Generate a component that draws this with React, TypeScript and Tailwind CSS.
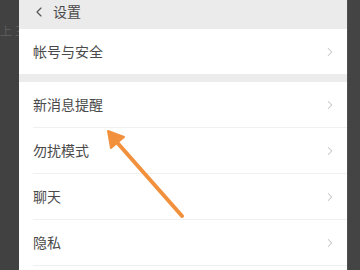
import { ChevronLeft, ChevronRight } from 'lucide-react'

const font = { fontFamily: '"Noto Sans CJK SC", "Noto Sans", sans-serif' }

function Row({ label }: { label: string }) {
  return (
    <div className="h-[46px] shrink-0 flex items-center bg-white pl-[14px]">
      <div className="flex-1 h-full flex items-center pr-[10px] border-b border-[#f0f0f0]">
        <span className="flex-1 text-[14px] text-[#4a4a4a]">{label}</span>
        <ChevronRight size={14} strokeWidth={1.75} className="text-[#c4c4c4]" />
      </div>
    </div>
  )
}

export default function App() {
  return (
    <div className="relative w-[360px] h-[270px] overflow-hidden flex bg-[#434343]" style={font}>
      {/* dimmed edge on the left */}
      <div className="w-[19px] bg-[#414141] flex flex-col">
        <div className="mt-[25px] text-[12px] leading-[12px] text-[#5c5c5c] whitespace-nowrap">上 三</div>
      </div>

      {/* settings panel */}
      <div className="w-[328px] flex flex-col bg-[#ebebeb]">
        <div className="h-[29px] shrink-0 flex items-start pt-[2px] pl-[12px] gap-[6px]">
          <ChevronLeft size={16} strokeWidth={1.75} className="text-[#555] mt-[2px]" />
          <span className="text-[14px] leading-[18px] text-[#4a4a4a]">设置</span>
        </div>
        <div className="h-[45px] shrink-0 flex items-center bg-white pl-[14px] pr-[10px]">
          <span className="flex-1 text-[14px] text-[#4a4a4a]">帐号与安全</span>
          <ChevronRight size={14} strokeWidth={1.75} className="text-[#c4c4c4]" />
        </div>
        <div className="h-[8px] shrink-0 bg-[#ececec]" />
        <div className="flex-1 flex flex-col bg-white">
          <Row label="新消息提醒" />
          <Row label="勿扰模式" />
          <Row label="聊天" />
          <Row label="隐私" />
        </div>
      </div>

      {/* dimmed edge on the right */}
      <div className="flex-1 bg-[#444444] border-l border-[#505050]" />

      {/* orange pointer arrow */}
      <svg className="absolute left-0 top-0 pointer-events-none" width="360" height="270">
        <line x1="182" y1="216" x2="114" y2="139" stroke="#f2913d" strokeWidth="4" strokeLinecap="round" />
        <polygon points="108,131 124,137 111,148" fill="#f2913d" stroke="#f2913d" strokeWidth="2" strokeLinejoin="round" />
      </svg>
    </div>
  )
}
